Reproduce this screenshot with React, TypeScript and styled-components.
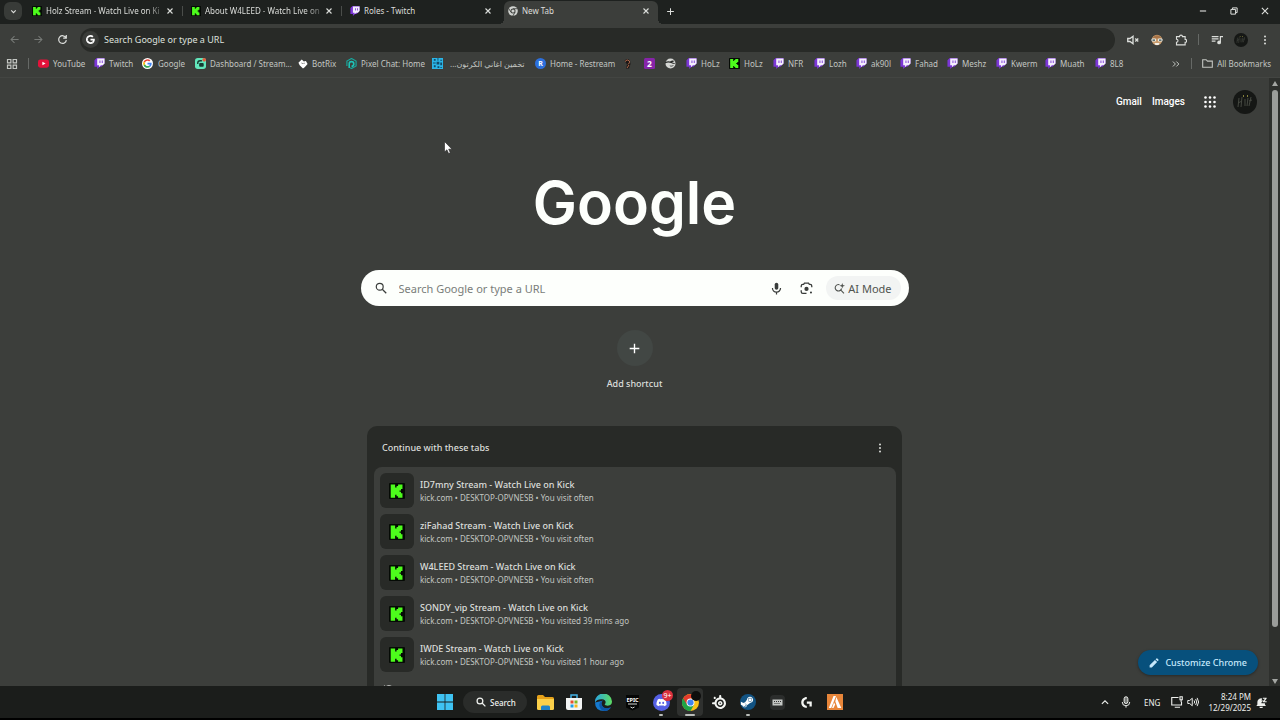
import React from "react";
import styled, { createGlobalStyle, css } from "styled-components";
import { FaDiscord, FaSteamSymbol } from "react-icons/fa";
import { SiSteelseries, SiLogitechg } from "react-icons/si";

const c = {
  strip: "#1e211f",
  surface: "#3c3e3b",
  field: "#282a27",
  tile: "#282a27",
  text: "#dcdedb",
  muted: "#c3c6c2",
  task: "#1b1d1b",
};

const Global = createGlobalStyle`
  * { box-sizing: border-box; }
  html, body { margin: 0; padding: 0; background: ${c.surface}; }
  body { font-family: "Noto Sans", "DejaVu Sans", sans-serif; font-size: 9px; color: ${c.text}; }
  button, input { font: inherit; color: inherit; border: 0; background: none; padding: 0; margin: 0; }
  a { color: inherit; text-decoration: none; }
  ul { list-style: none; margin: 0; padding: 0; }
  svg { display: block; flex: none; }
`;

const Shell = styled.div`
  display: flex;
  flex-direction: column;
  height: 100vh;
  overflow: hidden;
  position: relative;
`;

/* ---------- tab strip ---------- */
const TabStrip = styled.header`
  display: flex;
  align-items: stretch;
  height: 24px;
  flex: none;
  padding-left: 4px;
  background: ${c.strip};
`;
const TabSearch = styled.button`
  width: 18px;
  height: 18px;
  margin: 2px 5px 0 0;
  border-radius: 6px;
  background: #383b38;
  display: grid;
  place-items: center;
`;
const Tab = styled.div<{ $active?: boolean; $divided?: boolean }>`
  flex: 0 1 159px;
  min-width: 0;
  display: flex;
  align-items: center;
  gap: 4px;
  padding: 0 11px 2px 5px;
  position: relative;
  ${(p) =>
    p.$divided &&
    css`
      &::after {
        content: "";
        position: absolute;
        right: 3px;
        top: 6px;
        width: 1px;
        height: 10px;
        background: #4a4d4a;
      }
    `}
  ${(p) =>
    p.$active &&
    css`
      flex-basis: 154px;
      margin-top: 1px;
      padding: 0 7px 3px 4px;
      border-radius: 6px 6px 0 0;
      background: ${c.surface};
      &::before,
      &::after {
        content: "";
        position: absolute;
        bottom: 0;
        width: 5px;
        height: 5px;
      }
      &::before {
        left: -5px;
        background: radial-gradient(circle at 0 0, transparent 5px, ${c.surface} 5px);
      }
      &::after {
        right: -5px;
        background: radial-gradient(circle at 100% 0, transparent 5px, ${c.surface} 5px);
      }
    `}
`;
const TabTitle = styled.span<{ $fade?: boolean }>`
  flex: 1;
  min-width: 0;
  margin-right: -4px;
  overflow: hidden;
  white-space: nowrap;
  font-size: 8px;
  line-height: 14px;
  ${(p) =>
    p.$fade &&
    css`
      mask-image: linear-gradient(90deg, #000 84%, rgba(0, 0, 0, 0.15));
    `}
`;
const IconButton = styled.button<{ $w?: number }>`
  width: ${(p) => p.$w ?? 16}px;
  height: 16px;
  display: grid;
  place-items: center;
  flex: none;
`;
const CloseButton = styled(IconButton)`
  width: 10px;
`;
const NewTab = styled(IconButton)`
  margin: 3px 0 0 4px;
`;
const WindowControls = styled.div`
  margin-left: auto;
  display: flex;
  align-items: center;
  padding-bottom: 2px;
`;

/* ---------- toolbar ---------- */
const Toolbar = styled.div`
  display: flex;
  align-items: center;
  flex: none;
  height: 31px;
  padding: 0 7px 0 6px;
  background: ${c.surface};
`;
const NavGroup = styled.div`
  display: flex;
  gap: 8px;
  margin-right: 10px;
`;
const Omnibox = styled.form`
  flex: 1;
  display: flex;
  align-items: center;
  gap: 5px;
  height: 24px;
  padding-left: 2px;
  border-radius: 12px;
  background: ${c.field};
`;
const EngineBadge = styled.span`
  width: 17px;
  height: 17px;
  border-radius: 50%;
  background: #3a3c39;
  display: grid;
  place-items: center;
`;
const OmniInput = styled.input`
  flex: 1;
  min-width: 0;
  outline: none;
  &::placeholder { color: #dfe1de; opacity: 1; }
`;
const Extensions = styled.div`
  display: flex;
  align-items: center;
  gap: 8px;
  margin-left: 10px;
`;
const Divider = styled.span<{ $before?: number; $after?: number }>`
  width: 1px;
  height: 11px;
  flex: none;
  margin-left: ${(p) => p.$before ?? 0}px;
  margin-right: ${(p) => p.$after ?? 0}px;
  background: #666966;
`;
const Avatar = styled.span<{ $size: number }>`
  width: ${(p) => p.$size}px;
  height: ${(p) => p.$size}px;
  border-radius: 50%;
  overflow: hidden;
  display: block;
  background: #151715;
`;

/* ---------- bookmarks ---------- */
const BookmarkBar = styled.nav`
  display: flex;
  align-items: center;
  flex: none;
  height: 23px;
  padding: 0 9px 5px 4px;
  color: ${c.muted};
  border-bottom: 1px solid #434542;
`;
const BookmarkList = styled.ul`
  display: flex;
  flex: 1;
  min-width: 0;
  overflow: hidden;
`;
const BookmarkItem = styled.li<{ $slot: number }>`
  flex: 0 0 ${(p) => p.$slot}px;
`;
const BookmarkLink = styled.a<{ $gap?: number }>`
  display: flex;
  align-items: center;
  gap: ${(p) => p.$gap ?? 4}px;
  height: 14px;
  white-space: nowrap;
  font-size: 8px;
`;

/* ---------- page ---------- */
const Page = styled.div`
  flex: 1;
  min-height: 0;
  display: flex;
  position: relative;
`;
const Content = styled.main`
  flex: 1;
  min-width: 0;
  overflow: hidden;
  display: flex;
  flex-direction: column;
  align-items: center;
`;
const TopLinks = styled.div`
  align-self: stretch;
  display: flex;
  justify-content: flex-end;
  align-items: center;
  gap: 10px;
  height: 47px;
  flex: none;
  padding-right: 12px;
  font: 500 10px/14px Roboto, sans-serif;
  color: #fff;
`;
const AppsButton = styled(IconButton)`
  margin: 0 5px 0 7px;
`;
const Wordmark = styled.h1`
  margin: 38px 0 0;
  height: 107px;
  flex: none;
  font: 600 59px/80px Inter, sans-serif;
  color: #fdfffc;
`;
const SearchBox = styled.form`
  flex: none;
  display: flex;
  align-items: center;
  width: 548px;
  max-width: 90%;
  height: 36px;
  padding: 0 8px 0 14px;
  border-radius: 18px;
  background: #fdfffc;
  color: #3a3d3b;
`;
const SearchInput = styled.input`
  flex: 1;
  min-width: 0;
  margin-left: 12px;
  font-size: 11px;
  outline: none;
  &::placeholder { color: #7a7d7a; opacity: 1; }
`;
const LensButton = styled(IconButton)`
  margin-left: 14px;
`;
const AiMode = styled.button`
  display: flex;
  align-items: center;
  gap: 3px;
  height: 24px;
  padding: 0 9px 0 8px;
  margin-left: 12px;
  border-radius: 12px;
  background: #f2f4f3;
  color: #50534f;
  font-size: 11px;
`;
const Shortcut = styled.button`
  flex: none;
  display: flex;
  flex-direction: column;
  align-items: center;
  gap: 11px;
  margin-top: 24px;
  font-weight: 500;
  line-height: 14px;
`;
const ShortcutDisc = styled.span`
  width: 36px;
  height: 36px;
  border-radius: 50%;
  background: #424744;
  display: grid;
  place-items: center;
`;
const Card = styled.section`
  flex: none;
  width: 535px;
  max-width: 88%;
  margin-top: 35px;
  padding: 0 6px 8px 7px;
  border-radius: 10px;
  background: ${c.field};
`;
const CardHead = styled.div`
  display: flex;
  align-items: center;
  justify-content: space-between;
  height: 41px;
  padding: 2px 8px 0;
`;
const CardTitle = styled.h2`
  margin: 0;
  font-size: 9px;
  font-weight: 500;
`;
const Visits = styled.ul`
  padding: 6px 6px 0;
  border-radius: 8px;
  background: ${c.surface};
`;
const VisitLink = styled.a`
  display: flex;
  gap: 6px;
  padding-bottom: 6px;
`;
const VisitTile = styled.span`
  width: 34px;
  height: 35px;
  flex: none;
  border-radius: 6px;
  background: ${c.tile};
  display: grid;
  place-items: center;
`;
const VisitText = styled.span`
  display: flex;
  flex-direction: column;
  padding-top: 5px;
`;
const VisitName = styled.span`
  font-size: 9px;
  font-weight: 500;
  line-height: 14px;
`;
const VisitMeta = styled.span`
  font-size: 8px;
  line-height: 12px;
  color: ${c.muted};
`;
const HistoryLink = styled.a`
  display: flex;
  align-items: center;
  gap: 6px;
  height: 24px;
  padding: 4px 3px;
`;
const Scrollbar = styled.div`
  width: 11px;
  flex: none;
  display: flex;
  flex-direction: column;
  align-items: center;
  justify-content: space-between;
  padding: 3px 0 2px;
  background: #2e302d;
`;
const Thumb = styled.span`
  width: 6px;
  flex: 0 0 89%;
  margin-bottom: auto;
  margin-top: 4px;
  border-radius: 3px;
  background: #9b9d9a;
`;
const Customize = styled.button`
  position: absolute;
  right: 22px;
  bottom: 11px;
  display: flex;
  align-items: center;
  gap: 6px;
  height: 25px;
  padding: 0 11px;
  border-radius: 13px;
  background: #07507c;
  color: #c6e8fb;
  font-weight: 500;
  box-shadow: 0 1px 3px rgba(0, 0, 0, 0.35);
`;
const Pointer = styled.svg`
  position: absolute;
  left: 444px;
  top: 141px;
`;

/* ---------- taskbar ---------- */
const Taskbar = styled.footer`
  flex: none;
  display: grid;
  grid-template-columns: 1fr auto 1fr;
  align-items: center;
  height: 34px;
  background: ${c.task};
  border-bottom: 2px solid #000;
`;
const Launchers = styled.div`
  grid-column: 2;
  display: flex;
  align-items: center;
  gap: 3px;
`;
const Launcher = styled.button<{ $on?: boolean; $running?: boolean }>`
  position: relative;
  width: 26px;
  height: 28px;
  border-radius: 4px;
  display: grid;
  place-items: center;
  color: #f4f6f3;
  background: ${(p) => (p.$on ? "#2f312f" : "none")};
  ${(p) =>
    p.$running &&
    css`
      &::after {
        content: "";
        position: absolute;
        bottom: 0;
        left: 50%;
        width: ${p.$on ? 10 : 4}px;
        height: 2px;
        margin-left: ${p.$on ? -5 : -2}px;
        border-radius: 1px;
        background: #b9bcb9;
      }
    `}
`;
const TaskSearch = styled.button`
  display: flex;
  align-items: center;
  gap: 4px;
  height: 22px;
  width: 64px;
  margin: 0 2px;
  padding-left: 13px;
  border-radius: 11px;
  background: #2a2c2a;
  color: #f0f2ef;
  font-size: 8px;
  font-weight: 500;
`;
const Badge = styled.span`
  position: absolute;
  right: 1px;
  top: 2px;
  min-width: 11px;
  height: 11px;
  border-radius: 6px;
  background: #d9303e;
  color: #fff;
  font-size: 7px;
  line-height: 11px;
  text-align: center;
`;
const ProfileDot = styled.span`
  position: absolute;
  right: 2px;
  top: 3px;
  width: 10px;
  height: 10px;
  border-radius: 50%;
  background: #0d0e0d;
`;
const Tray = styled.div`
  grid-column: 3;
  display: flex;
  align-items: center;
  justify-content: flex-end;
  padding-right: 14px;
  color: #eef0ed;
  font-size: 8px;
`;
const Lang = styled.button`
  margin: 0 9px 0 5px;
  font-size: 8px;
`;
const Clock = styled.button`
  margin: 0 5px 0 7px;
  text-align: right;
  line-height: 11px;
  font-size: 8px;
  white-space: nowrap;
`;

/* ---------- glyphs ---------- */
type Line = { d: string; s?: number; w?: number; vb?: number; color?: string };
const Stroke = ({ d, s = 10, w = 1.5, vb = 16, color = "currentColor" }: Line) => (
  <svg width={s} height={s} viewBox={`0 0 ${vb} ${vb}`} fill="none" stroke={color} strokeWidth={w} aria-hidden>
    <path d={d} />
  </svg>
);
const Close = () => <Stroke d="M4 4l8 8M12 4l-8 8" s={10} w={1.8} />;
const Dots = ({ s = 11 }: { s?: number }) => (
  <svg width={s} height={s} viewBox="0 0 12 12" fill="currentColor" aria-hidden>
    <circle cx="6" cy="1.8" r="1.2" /><circle cx="6" cy="6" r="1.2" /><circle cx="6" cy="10.2" r="1.2" />
  </svg>
);
const Kick = ({ s = 11 }: { s?: number }) => (
  <svg width={s} height={s} viewBox="0 0 32 32" aria-hidden>
    <rect width="32" height="32" rx="2" fill="#050a05" />
    <path
      fill="#4dfc1c"
      transform="translate(2 3) scale(1.1)"
      d="M1.300 0h8v5.300H12V2.700h2.700V0h8v8H20v2.700h-2.700v2.600H20V16h2.700v8h-8v-2.700H12v-2.600H9.300V24h-8Z"
    />
  </svg>
);
const Twitch = ({ s = 11 }: { s?: number }) => (
  <svg width={s} height={s} viewBox="0 0 24 24" aria-hidden>
    <path fill="#7b36d6" d="M6 0 1 5v14h6v5l5-5h4l7-7V0Z" />
    <path fill="#f5effd" d="M7 1h16v11l-4 4h-4l-4 4V16H7Z" />
    <path fill="#7b36d6" d="M12 5.500h2V11h-2zM17 5.500h2V11h-2z" />
  </svg>
);
const GoogleG = ({ s = 11, mono }: { s?: number; mono?: boolean }) => (
  <svg width={s} height={s} viewBox="0 0 48 48" aria-hidden>
    {!mono && <circle cx="24" cy="24" r="24" fill="#fff" />}
    <g transform={mono ? undefined : "translate(5 5) scale(.79)"}>
      <path fill={mono ? "#fff" : "#ea4335"} d="M24 9.500c3.540 0 6.710 1.220 9.210 3.600l6.850-6.850C35.900 2.380 30.470 0 24 0 14.620 0 6.510 5.380 2.560 13.220l7.980 6.190C12.430 13.720 17.740 9.500 24 9.500z" />
      <path fill={mono ? "#fff" : "#4285f4"} d="M46.980 24.550c0-1.570-.15-3.090-.38-4.550H24v9.020h12.940c-.58 2.960-2.260 5.480-4.780 7.180l7.730 6c4.510-4.180 7.090-10.360 7.090-17.650z" />
      <path fill={mono ? "#fff" : "#fbbc05"} d="M10.530 28.590c-.48-1.450-.76-2.990-.76-4.590s.27-3.140.76-4.590l-7.980-6.190C.92 16.460 0 20.120 0 24s.92 7.540 2.560 10.780l7.970-6.190z" />
      <path fill={mono ? "#fff" : "#34a853"} d="M24 48c6.480 0 11.930-2.130 15.890-5.810l-7.730-6c-2.150 1.450-4.920 2.300-8.160 2.300-6.260 0-11.570-4.220-13.470-9.910l-7.980 6.190C6.510 42.620 14.620 48 24 48z" />
    </g>
  </svg>
);
const ChromeColor = ({ s }: { s: number }) => (
  <svg width={s} height={s} viewBox="0 0 24 24" aria-hidden>
    <circle cx="12" cy="12" r="12" fill="#fbc116" />
    <path fill="#1ea446" d="M1.600 6A12 12 0 0 0 12 24l5-9-5-3Z" />
    <path fill="#e33b2e" d="M1.600 6A12 12 0 0 1 22.400 6.500H12L7 15Z" />
    <circle cx="12" cy="12" r="5.600" fill="#fff" />
    <circle cx="12" cy="12" r="4.400" fill="#3f83ee" />
  </svg>
);
const ChromeGray = ({ s }: { s: number }) => (
  <svg width={s} height={s} viewBox="0 0 24 24" aria-hidden>
    <circle cx="12" cy="12" r="11.500" fill="#d0d2cf" />
    <path d="M12 6.500h11M7.200 15 1.500 5.500M16.800 15 11.500 24" stroke={c.surface} strokeWidth="2" />
    <circle cx="12" cy="12" r="6" fill={c.surface} />
    <circle cx="12" cy="12" r="3.800" fill="#d0d2cf" />
  </svg>
);
const YouTube = () => (
  <svg width="11" height="11" viewBox="0 0 24 24" aria-hidden>
    <rect y="3" width="24" height="18" rx="5" fill="#e3123a" />
    <path d="M9.500 8v8l7-4z" fill="#fff" />
  </svg>
);
const Streamlabs = () => (
  <svg width="11" height="11" viewBox="0 0 24 24" aria-hidden>
    <rect width="24" height="24" rx="6" fill="#62e6bb" />
    <path d="M6 13v-2a5 5 0 0 1 5-5h4" fill="none" stroke="#173b32" strokeWidth="3" />
    <rect x="9" y="11" width="10" height="8" rx="2" fill="#173b32" />
    <circle cx="20" cy="4" r="4" fill="#e35d3d" />
  </svg>
);
const BotRix = () => (
  <svg width="10" height="10" viewBox="0 0 24 24" aria-hidden>
    <path d="M9 1 1 9l3 6 8 8 4-3 7-8-4-7-5 1z" fill="#fff" />
    <path d="M9 9l2 3M15 9l-1 3" stroke="#555" strokeWidth="2" />
  </svg>
);
const PixelChat = () => (
  <svg width="11" height="11" viewBox="0 0 24 24" aria-hidden>
    <path d="M12 1 22 6.500v11L12 23l-3-1.500M2 17.500v-11L12 1" fill="none" stroke="#17a79d" strokeWidth="2.500" />
    <path d="M7 22v-9a5 5 0 1 1 5 5" fill="none" stroke="#1fc3b6" strokeWidth="3.500" />
  </svg>
);
const Mosaic = () => (
  <svg width="11" height="11" viewBox="0 0 12 12" aria-hidden>
    <rect width="12" height="12" fill="#2bb6e8" />
    <path fill="#124b6b" d="M2 1h2v2H2zM6 0h1v3H6zM9 2h2v1H9zM1 5h3v1H1zM5 4h3v3H5zM9 5h2v3H9zM2 8h2v2H2zM6 9h2v2H6zM9 10h2v1H9z" />
  </svg>
);
const Restream = () => (
  <svg width="11" height="11" viewBox="0 0 22 22" aria-hidden>
    <circle cx="11" cy="11" r="11" fill="#2c6fdc" />
    <text x="11" y="16" fill="#fff" fontSize="14" fontWeight="700" textAnchor="middle">R</text>
  </svg>
);
const DarkHead = () => (
  <svg width="11" height="11" viewBox="0 0 22 22" aria-hidden>
    <path d="M5 5q6-6 11 0l1 7-3 9H8l2-8z" fill="#1b1716" />
    <path d="M6 7q4-6 9-1 1 4-3 7M14 14l-4 6" fill="none" stroke="#b0694c" strokeWidth="2" />
  </svg>
);
const Two = () => (
  <svg width="11" height="11" viewBox="0 0 22 22" aria-hidden>
    <rect width="22" height="22" rx="3" fill="#8624a8" />
    <text x="11" y="17" fill="#fff" fontSize="17" fontWeight="700" textAnchor="middle">2</text>
  </svg>
);
const Swirl = () => (
  <svg width="11" height="11" viewBox="0 0 22 22" aria-hidden>
    <circle cx="11" cy="11" r="10" fill="#d5d7d4" />
    <path d="M0 8q6-2 10-1 5-3 9-1l-5 3q5 0 7 3-6 0-9-2Q6 8 0 11zM9 15q5 1 9-1-3 4-7 3z" fill="#2a2c2a" />
  </svg>
);
const Face = () => (
  <svg width="12" height="12" viewBox="0 0 24 24" aria-hidden>
    <circle cx="12" cy="12" r="10.500" fill="#c99b6c" />
    <path d="M2 9Q12-4 22 9z" fill="#a87549" />
    <rect x="1" y="9" width="9" height="6" rx="2" fill="#e8eeea" /><rect x="14" y="9" width="9" height="6" rx="2" fill="#e8eeea" />
    <path d="M3 12h5M16 12h5" stroke="#3a4a48" strokeWidth="2.500" />
    <path d="M7 18h10l-2 4H9z" fill="#f1efe9" />
  </svg>
);
const AvatarArt = ({ size }: { size: number }) => (
  <Avatar $size={size}>
    <svg width={size} height={size} viewBox="0 0 24 24" fill="none" aria-hidden>
      <path d="M6 8l-1 9M9 7l-1 10M5 13l4-2M12 9v7M15 8l-1 8M18 7l-2 9M16 11l3-1" stroke="#454841" strokeWidth="1" />
      <path d="M10 6h1M14 6h1" stroke="#a9a44a" strokeWidth="1.500" />
    </svg>
  </Avatar>
);
const Magnifier = ({ s, w = 1.8 }: { s: number; w?: number }) => (
  <svg width={s} height={s} viewBox="0 0 16 16" fill="none" stroke="currentColor" strokeWidth={w} aria-hidden>
    <circle cx="6.300" cy="6.300" r="4.600" /><path d="M9.700 9.700 15 15" />
  </svg>
);

/* ---------- data ---------- */
const bookmarks: { label?: string; name?: string; icon: React.ReactNode; slot: number; gap?: number; rtl?: boolean }[] = [
  { label: "YouTube", icon: <YouTube />, slot: 56 },
  { label: "Twitch", icon: <Twitch />, slot: 48 },
  { label: "Google", icon: <GoogleG />, slot: 53, gap: 5 },
  { label: "Dashboard / Stream...", icon: <Streamlabs />, slot: 103 },
  { label: "BotRix", icon: <BotRix />, slot: 48 },
  { label: "Pixel Chat: Home", icon: <PixelChat />, slot: 86 },
  { label: "تخمين اغاني الكرتون...", icon: <Mosaic />, slot: 103, gap: 7, rtl: true },
  { label: "Home - Restream", icon: <Restream />, slot: 87 },
  { name: "Profile", icon: <DarkHead />, slot: 22 },
  { name: "Channel", icon: <Two />, slot: 21 },
  { name: "Stream", icon: <Swirl />, slot: 21 },
  { label: "HoLz", icon: <Twitch />, slot: 43 },
  { label: "HoLz", icon: <Kick />, slot: 44 },
  { label: "NFR", icon: <Twitch />, slot: 41 },
  { label: "Lozh", icon: <Twitch />, slot: 42 },
  { label: "ak90l", icon: <Twitch />, slot: 44 },
  { label: "Fahad", icon: <Twitch />, slot: 47 },
  { label: "Meshz", icon: <Twitch />, slot: 49 },
  { label: "Kwerm", icon: <Twitch />, slot: 49 },
  { label: "Muath", icon: <Twitch />, slot: 50 },
  { label: "8L8", icon: <Twitch />, slot: 30 },
];
const visits = [
  ["ID7mny Stream - Watch Live on Kick", "You visit often"],
  ["ziFahad Stream - Watch Live on Kick", "You visit often"],
  ["W4LEED Stream - Watch Live on Kick", "You visit often"],
  ["SONDY_vip Stream - Watch Live on Kick", "You visited 39 mins ago"],
  ["IWDE Stream - Watch Live on Kick", "You visited 1 hour ago"],
];
const tabs = [
  { title: "Holz Stream - Watch Live on Ki", icon: <Kick s={10} />, fade: true, divided: true },
  { title: "About W4LEED - Watch Live on", icon: <Kick s={10} />, fade: true, divided: true },
  { title: "Roles - Twitch", icon: <Twitch s={10} /> },
  { title: "New Tab", icon: <ChromeGray s={10} />, active: true },
];

export default function App() {
  return (
    <>
      <Global />
      <Shell>
        <TabStrip>
          <TabSearch aria-label="Search tabs"><Stroke d="M4 6l4 4 4-4" s={9} w={2} /></TabSearch>
          {tabs.map((t) => (
            <Tab key={t.title} $active={t.active} $divided={t.divided}>
              {t.icon}
              <TabTitle $fade={t.fade}>{t.title}</TabTitle>
              <CloseButton aria-label={`Close ${t.title}`}><Close /></CloseButton>
            </Tab>
          ))}
          <NewTab aria-label="New tab"><Stroke d="M8 2v12M2 8h12" s={9} w={1.8} /></NewTab>
          <WindowControls>
            <IconButton $w={31} aria-label="Minimize"><Stroke d="M3 8h10" s={10} w={1.8} /></IconButton>
            <IconButton $w={31} aria-label="Restore"><Stroke d="M3 5.500h7.500V13H3zM5.500 5V3H13v7.500h-2" s={10} w={1.6} /></IconButton>
            <IconButton $w={31} aria-label="Close window"><Stroke d="M3 3l10 10M13 3L3 13" s={10} w={1.8} /></IconButton>
          </WindowControls>
        </TabStrip>

        <Toolbar>
          <NavGroup>
            <IconButton aria-label="Back"><Stroke d="M14 8H3M8 3L3 8l5 5" s={11} color="#777a77" /></IconButton>
            <IconButton aria-label="Forward"><Stroke d="M2 8h11M8 3l5 5-5 5" s={11} color="#777a77" /></IconButton>
            <IconButton aria-label="Reload"><Stroke d="M13 5.500A5.600 5.600 0 1 0 13.600 9M13.500 1.500V6H9" s={11} w={1.8} /></IconButton>
          </NavGroup>
          <Omnibox>
            <EngineBadge><GoogleG s={9} mono /></EngineBadge>
            <OmniInput aria-label="Address and search bar" placeholder="Search Google or type a URL" />
          </Omnibox>
          <Extensions>
            <IconButton aria-label="Muted">
              <svg width="12" height="12" viewBox="0 0 16 16" fill="none" stroke="currentColor" strokeWidth="1.800" aria-hidden>
                <path d="M1 6h3l4-3v10L4 10H1zM11 6l4 4M15 6l-4 4" />
              </svg>
            </IconButton>
            <IconButton aria-label="Extension"><Face /></IconButton>
            <IconButton aria-label="Extensions"><Stroke d="M2 3.500h4a2 2 0 0 1 4 0h3.500v3.700a2 2 0 0 1 0 4V14.500H2v-3.500a2 2 0 0 0 0-4z" s={12} w={1.5} /></IconButton>
            <Divider $before={1} $after={2} />
            <IconButton aria-label="Media controls">
              <svg width="12" height="12" viewBox="0 0 16 16" fill="none" stroke="currentColor" strokeWidth="1.600" aria-hidden>
                <path d="M1 3.500h9M1 6.500h9M1 9.500h5M12.500 11V3.500H16" /><circle cx="10.800" cy="11.300" r="1.700" fill="currentColor" />
              </svg>
            </IconButton>
            <IconButton aria-label="Profile"><AvatarArt size={14} /></IconButton>
            <IconButton aria-label="Menu"><Dots s={10} /></IconButton>
          </Extensions>
        </Toolbar>

        <BookmarkBar>
          <IconButton aria-label="Apps"><Stroke d="M2 2h4.500v4.500H2zM9.500 2H14v4.500H9.500zM2 9.500h4.500V14H2zM9.500 9.500H14V14H9.500z" s={12} w={1.6} /></IconButton>
          <Divider $before={8} $after={9} />
          <BookmarkList>
            {bookmarks.map((b, i) => (
              <BookmarkItem key={i} $slot={b.slot}>
                <BookmarkLink href="#" $gap={b.gap} aria-label={b.name}>
                  {b.icon}
                  {b.label && <span dir={b.rtl ? "rtl" : undefined}>{b.label}</span>}
                </BookmarkLink>
              </BookmarkItem>
            ))}
          </BookmarkList>
          <IconButton aria-label="More bookmarks"><Stroke d="M3 4l4 4-4 4M8.500 4l4 4-4 4" s={10} w={1.6} /></IconButton>
          <Divider $before={7} $after={10} />
          <BookmarkLink as="button" $gap={4}>
            <svg width="11" height="11" viewBox="0 0 16 16" fill="none" stroke="currentColor" strokeWidth="1.600" aria-hidden>
              <path d="M1 2.500h5l2 2h7v9H1z" />
            </svg>
            All Bookmarks
          </BookmarkLink>
        </BookmarkBar>

        <Page>
          <Content>
            <TopLinks>
              <a href="#">Gmail</a>
              <a href="#">Images</a>
              <AppsButton aria-label="Google apps">
                <svg width="12" height="12" viewBox="0 0 12 12" fill="currentColor" aria-hidden>
                  {[1.5, 6, 10.5].map((y) => [1.5, 6, 10.5].map((x) => <circle key={`${x}-${y}`} cx={x} cy={y} r="1.300" />))}
                </svg>
              </AppsButton>
              <AvatarArt size={24} />
            </TopLinks>
            <Wordmark>Google</Wordmark>
            <SearchBox>
              <Magnifier s={12} w={1.6} />
              <SearchInput aria-label="Search" placeholder="Search Google or type a URL" />
              <IconButton type="button" aria-label="Voice search">
                <svg width="13" height="13" viewBox="0 0 16 16" fill="none" stroke="currentColor" strokeWidth="1.500" aria-hidden>
                  <rect x="5.800" y="1" width="4.400" height="8.500" rx="2.200" fill="currentColor" stroke="none" />
                  <path d="M3 7.500a5 5 0 0 0 10 0M8 12.500V15.500" />
                </svg>
              </IconButton>
              <LensButton type="button" aria-label="Search by image">
                <svg width="13" height="13" viewBox="0 0 16 16" fill="none" stroke="currentColor" strokeWidth="1.600" aria-hidden>
                  <path d="M1.500 6.500V5q0-2 2-2h1l1-1.500h5L11.500 3h1q2 0 2 2v1.500M1.500 10v2q0 2 2 2H8" />
                  <circle cx="8" cy="8.500" r="2.600" fill="currentColor" stroke="none" />
                  <circle cx="13.500" cy="13" r="1.300" fill="currentColor" stroke="none" />
                </svg>
              </LensButton>
              <AiMode type="button">
                <svg width="11" height="11" viewBox="0 0 16 16" fill="none" stroke="currentColor" strokeWidth="1.600" aria-hidden>
                  <path d="M8 2.500A4.700 4.700 0 1 0 11 8M10 10.500 14.500 15" />
                  <path d="M12 0l1 3 3 1-3 1-1 3-1-3-3-1 3-1z" fill="currentColor" stroke="none" />
                </svg>
                AI Mode
              </AiMode>
            </SearchBox>
            <Shortcut>
              <ShortcutDisc><Stroke d="M8 1v14M1 8h14" s={11} w={2} color="#fff" /></ShortcutDisc>
              Add shortcut
            </Shortcut>
            <Card>
              <CardHead>
                <CardTitle>Continue with these tabs</CardTitle>
                <IconButton aria-label="More options"><Dots s={10} /></IconButton>
              </CardHead>
              <Visits>
                {visits.map(([name, when]) => (
                  <li key={name}>
                    <VisitLink href="#">
                      <VisitTile><Kick s={16} /></VisitTile>
                      <VisitText>
                        <VisitName>{name}</VisitName>
                        <VisitMeta>kick.com • DESKTOP-OPVNESB • {when}</VisitMeta>
                      </VisitText>
                    </VisitLink>
                  </li>
                ))}
                <li>
                  <HistoryLink href="#" aria-label="See all history">
                    <Stroke d="M3 5a6 6 0 1 1-1 4M2 2v4h4M8 5v4l3 2" s={12} />
                  </HistoryLink>
                </li>
              </Visits>
            </Card>
          </Content>
          <Scrollbar>
            <svg width="6" height="5" viewBox="0 0 6 5" aria-hidden><path d="M3 0l3 5H0z" fill="#a4a6a3" /></svg>
            <Thumb />
            <svg width="6" height="5" viewBox="0 0 6 5" aria-hidden><path d="M3 5L0 0h6z" fill="#a4a6a3" /></svg>
          </Scrollbar>
          <Customize>
            <svg width="10" height="10" viewBox="0 0 16 16" fill="currentColor" aria-hidden>
              <path d="M1 15v-3.500L9.500 3 13 6.500 4.500 15zM10.500 2 12 .8q1-.5 1.800.2L15 2.200q.7.900 0 1.800L14 5.300z" />
            </svg>
            Customize Chrome
          </Customize>
        </Page>

        <Taskbar>
          <Launchers>
            <Launcher aria-label="Start">
              <svg width="16" height="16" viewBox="0 0 16 16" fill="#3fc3f3" aria-hidden>
                <path d="M0 0h7.600v7.600H0zM8.400 0H16v7.600H8.400zM0 8.400h7.600V16H0zM8.400 8.400H16V16H8.400z" />
              </svg>
            </Launcher>
            <TaskSearch><Magnifier s={10} w={2} />Search</TaskSearch>
            <Launcher aria-label="File Explorer">
              <svg width="17" height="15" viewBox="0 0 17 15" aria-hidden>
                <path d="M0 1.500Q0 0 1.500 0H6l2 2h7.500Q17 2 17 3.500V13H0z" fill="#e5a11a" />
                <path d="M0 4h17v9.500q0 1.500-1.500 1.500h-14Q0 15 0 13.500z" fill="#fbd04a" />
                <path d="M4 15v-3q0-1.500 1.500-1.500h6q1.500 0 1.500 1.500v3z" fill="#2083c8" />
              </svg>
            </Launcher>
            <Launcher aria-label="Store">
              <svg width="16" height="17" viewBox="0 0 16 17" aria-hidden>
                <path d="M5 4V1h6v3" fill="none" stroke="#46b3e6" strokeWidth="1.500" />
                <path d="M0 4h16v10q0 2-2 2H2q-2 0-2-2z" fill="#f3f5f4" />
                <path d="M4.500 6.500h3v3h-3z" fill="#e8502d" /><path d="M8.500 6.500h3v3h-3z" fill="#80b821" />
                <path d="M4.500 10.500h3v3h-3z" fill="#1f9fe5" /><path d="M8.500 10.500h3v3h-3z" fill="#f8b61b" />
              </svg>
            </Launcher>
            <Launcher aria-label="Edge">
              <svg width="17" height="17" viewBox="0 0 24 24" aria-hidden>
                <defs>
                  <linearGradient id="edgeTop" x1="0" x2="1"><stop offset="0" stopColor="#2aa6e0" /><stop offset="1" stopColor="#5ddc62" /></linearGradient>
                </defs>
                <path d="M0 12Q0 24 13 24q6 0 9.500-5-4 2-7.500 1-6-1-6-7 0-3 3-4z" fill="#1579cf" />
                <path d="M0 12A12 12 0 0 1 24 10.500q0 5.500-6 6-4 0-4.500-2 1.500-1 1.500-3 0-3.500-5-4Q3 7 0 12z" fill="url(#edgeTop)" />
                <path d="M9 13q1 7 8 7 3 0 5.500-1.500-3 5.500-9.500 5.500-6-1-7-8 0-5 4-6-1 1-1 3z" fill="#0d55a8" />
              </svg>
            </Launcher>
            <Launcher aria-label="Epic Games">
              <svg width="15" height="17" viewBox="0 0 30 34" aria-hidden>
                <path d="M2 2h26v25l-13 6-13-6z" fill="#050605" />
                <text x="15" y="15" fill="#fff" fontSize="11" fontWeight="700" textAnchor="middle">EPIC</text>
                <path d="M6 20h18M11 26l4 2 4-2" stroke="#d4d6d3" strokeWidth="2" fill="none" />
              </svg>
            </Launcher>
            <Launcher aria-label="Discord" $running>
              <svg width="17" height="17" viewBox="0 0 17 17" aria-hidden>
                <circle cx="8.500" cy="8.500" r="8.500" fill="#5560e4" />
                <g transform="translate(3 3)"><FaDiscord size={11} color="#fff" /></g>
              </svg>
              <Badge>9+</Badge>
            </Launcher>
            <Launcher aria-label="Chrome" $on $running><ChromeColor s={17} /><ProfileDot /></Launcher>
            <Launcher aria-label="SteelSeries"><SiSteelseries size={14} /></Launcher>
            <Launcher aria-label="Steam" $running>
              <svg width="16" height="16" viewBox="0 0 16 16" aria-hidden>
                <circle cx="8" cy="8" r="8" fill="#125383" />
                <g transform="translate(0 1)"><FaSteamSymbol size={14} color="#fff" /></g>
              </svg>
            </Launcher>
            <Launcher aria-label="Keyboard">
              <svg width="15" height="15" viewBox="0 0 15 15" aria-hidden>
                <rect width="15" height="15" rx="4" fill="#2b2d2c" />
                <rect x="2.500" y="4.500" width="10" height="6" fill="#c4c7c4" />
                <path d="M4 6.500h7M4.500 8.500h6" stroke="#333" strokeDasharray="1 1" />
              </svg>
            </Launcher>
            <Launcher aria-label="Logitech G HUB"><SiLogitechg size={11} /></Launcher>
            <Launcher aria-label="FiveM">
              <svg width="16" height="16" viewBox="0 0 16 16" aria-hidden>
                <rect width="16" height="16" fill="#e8863a" />
                <path d="M6.500 2h2.500L4.200 14H1.800zM9.300 3l5 11h-3.600L8.300 7.500zM7 8.500l1.200 2L6.500 14H5z" fill="#fff" />
              </svg>
            </Launcher>
          </Launchers>
          <Tray>
            <IconButton aria-label="Show hidden icons"><Stroke d="M3 11l5-5 5 5" s={10} w={1.8} /></IconButton>
            <IconButton $w={26} aria-label="Microphone">
              <svg width="12" height="12" viewBox="0 0 16 16" fill="none" stroke="currentColor" strokeWidth="1.300" aria-hidden>
                <rect x="5.500" y="1" width="5" height="9" rx="2.500" fill="#777a77" /><path d="M3 8a5 5 0 0 0 10 0M8 13v2.500" />
              </svg>
            </IconButton>
            <Lang>ENG</Lang>
            <IconButton aria-label="Network">
              <svg width="12" height="12" viewBox="0 0 16 16" fill="none" stroke="currentColor" strokeWidth="1.500" aria-hidden>
                <path d="M10 2H1v10h13V8M5 15h7M12 1h3v4h-3zM13.500 5v3" />
              </svg>
            </IconButton>
            <IconButton aria-label="Volume">
              <svg width="12" height="12" viewBox="0 0 16 16" fill="none" stroke="currentColor" strokeWidth="1.300" aria-hidden>
                <path d="M1 6h2.500L7 3v10L3.500 10H1zM9.500 6q1.500 2 0 4M11.500 4q3 4 0 8M13.500 2.500q4 5.500 0 11" />
              </svg>
            </IconButton>
            <Clock>8:24 PM<br />12/29/2025</Clock>
            <CloseButton aria-label="Notifications">
              <svg width="11" height="11" viewBox="0 0 16 16" fill="currentColor" aria-hidden>
                <path d="M9 2a5.500 5.500 0 0 0-7 5v4L.5 13h14L13 11V9H8V7.500L10.500 5H8zM5 14h5a2.500 2.500 0 0 1-5 0zM10 1h5.500v1.200L12.500 6h3v1.500H10V6.200L13 2.500h-3z" />
              </svg>
            </CloseButton>
          </Tray>
        </Taskbar>
        <Pointer width="9" height="13" viewBox="0 0 9 13" aria-hidden>
          <path d="M.5.5v10.500l2.400-2.200 1.700 3.700 1.700-.8-1.600-3.500H8z" fill="#fff" stroke="#222" strokeWidth=".6" />
        </Pointer>
      </Shell>
    </>
  );
}
